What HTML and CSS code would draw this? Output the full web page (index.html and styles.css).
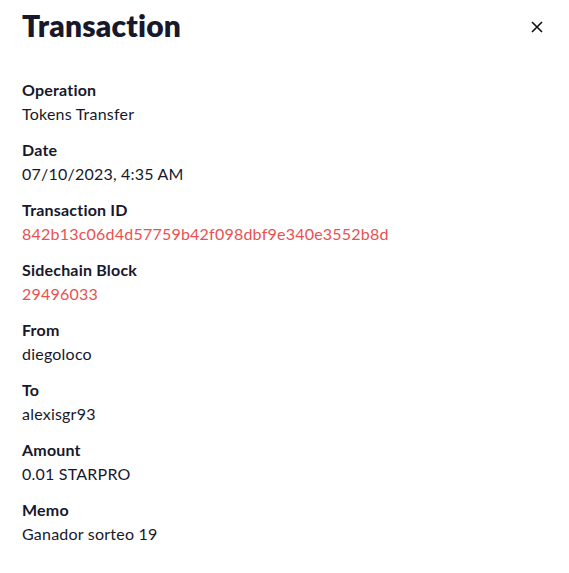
FILE: index.html
```html
<!DOCTYPE html>
<html>
<head>
<meta charset="utf-8">
<link rel="stylesheet" href="styles.css">
</head>
<body>
<div class="modal">
  <div class="header">
    <h1 class="title">Transaction</h1>
    <button class="close" aria-label="Close">
      <svg width="12" height="12" viewBox="0 0 12 12"><path d="M1 1L11 11M11 1L1 11" stroke="#111" stroke-width="1.6" fill="none"/></svg>
    </button>
  </div>
  <dl class="details">
    <div class="item"><dt>Operation</dt><dd>Tokens Transfer</dd></div>
    <div class="item"><dt>Date</dt><dd>07/10/2023, 4:35 AM</dd></div>
    <div class="item"><dt>Transaction ID</dt><dd class="link">842b13c06d4d57759b42f098dbf9e340e3552b8d</dd></div>
    <div class="item"><dt>Sidechain Block</dt><dd class="link">29496033</dd></div>
    <div class="item"><dt>From</dt><dd>diegoloco</dd></div>
    <div class="item"><dt>To</dt><dd>alexisgr93</dd></div>
    <div class="item"><dt>Amount</dt><dd>0.01 STARPRO</dd></div>
    <div class="item"><dt>Memo</dt><dd>Ganador sorteo 19</dd></div>
  </dl>
</div>
</body>
</html>
```
FILE: styles.css
```css
html, body { margin: 0; padding: 0; background: #fff; }
body { font-family: "Lato", "Open Sans", sans-serif; color: #17182b; }
.modal { padding: 5px 22px 0 22px; }
.header { display: flex; justify-content: space-between; align-items: flex-start; }
.title { margin: 0; font-size: 30px; line-height: 40px; font-weight: 800; letter-spacing: 0.2px; }
.close { border: 0; background: none; padding: 0; margin: 16px 4px 0 0; width: 12px; height: 12px; display: flex; }
.details { margin: 33px 0 0 0; display: flex; flex-direction: column; gap: 12px; }
.item { display: flex; flex-direction: column; }
dt { font-size: 16px; line-height: 24px; font-weight: 700; letter-spacing: 0.2px; }
dd { margin: 0; font-size: 16px; line-height: 24px; font-weight: 400; letter-spacing: 0.22px; }
.link { color: #ec5050; }
```
